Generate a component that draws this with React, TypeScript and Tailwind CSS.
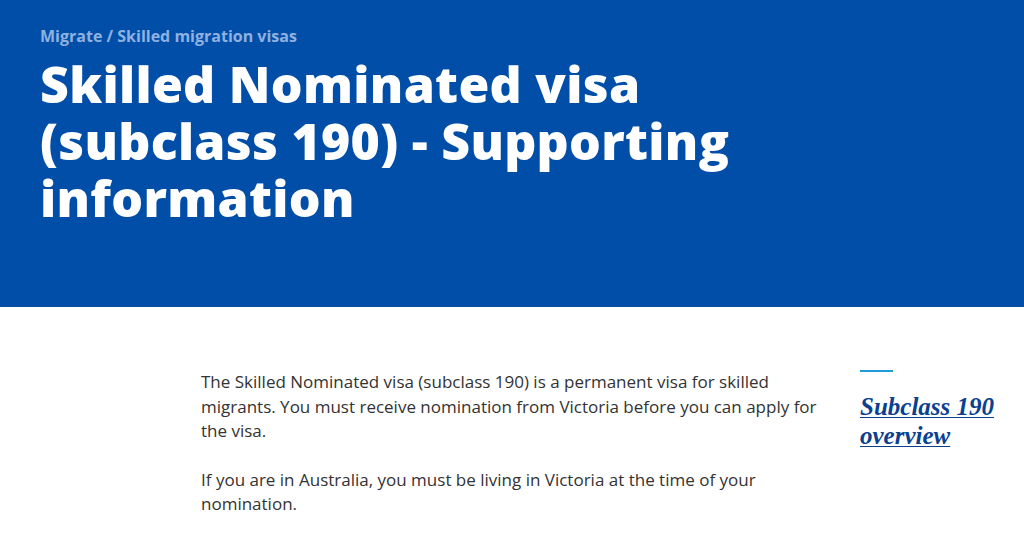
const SIDE_LINKS = [{ id: 1, title: 'Subclass 190 overview', url: '#' }]

export default function App() {
  return (
    <div className="min-h-[542px] w-full bg-white font-['Open_Sans','Noto_Sans',sans-serif]">
      {/* ---------- Hero ---------- */}
      <header className="h-[307px] w-full bg-[#004ea8] px-10 pt-[26px]">
        <nav className="text-[16px] font-bold leading-5 text-[#8fb1e0]">
          Migrate / Skilled migration visas
        </nav>
        <h1 className="mt-[10px] w-[760px] text-[50px] font-extrabold leading-[57px] tracking-[0.3px] text-white">
          Skilled Nominated visa (subclass 190) - Supporting information
        </h1>
      </header>

      {/* ---------- Body ---------- */}
      <main className="flex pl-[201px] pt-[63px]">
        <div className="w-[630px] text-[17px] leading-[24.5px] text-[#333333]">
          <p>
            The Skilled Nominated visa (subclass 190) is a permanent visa for skilled migrants. You
            must receive nomination from Victoria before you can apply for the visa.
          </p>
          <p className="mt-[24px]">
            If you are in Australia, you must be living in Victoria at the time of your nomination.
          </p>
        </div>
        <aside className="ml-[29px] w-[150px] pt-[6px] -mt-[6px]">
          <div className="h-[2px] w-[33px] bg-[#1e9ad6]" />
          {SIDE_LINKS.map((link) => (
            <a
              key={link.id}
              href={link.url}
              className="mt-[20px] block font-['Liberation_Serif',serif] text-[25px] font-bold italic leading-[29px] text-[#0b3f8f] underline decoration-1 underline-offset-2"
            >
              {link.title}
            </a>
          ))}
        </aside>
      </main>
    </div>
  )
}
